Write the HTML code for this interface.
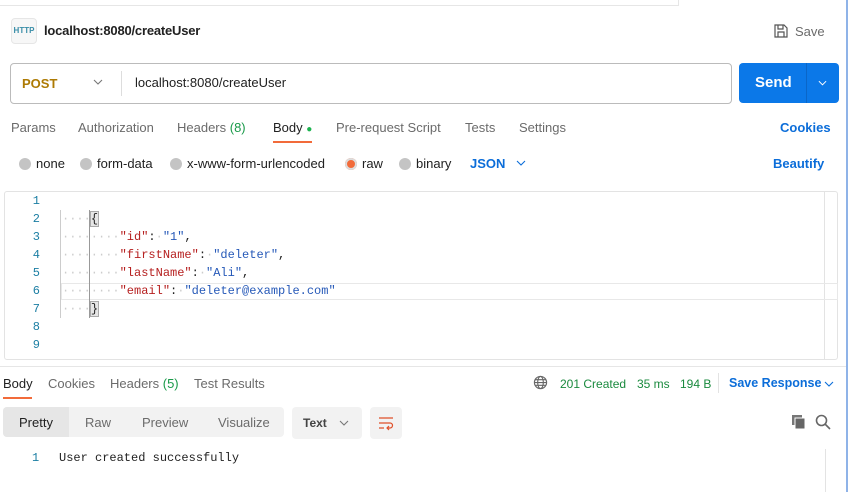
<!DOCTYPE html>
<html><head><style>
*{box-sizing:border-box;margin:0;padding:0}
body{width:850px;height:492px;overflow:hidden;background:#fff;font-family:"Liberation Sans",sans-serif;font-size:13px;color:#212121;position:relative}
.a{position:absolute;white-space:nowrap}
.mono{font-family:"Liberation Mono",monospace;font-size:12px}
.g{color:#6b6b6b}
.blue{color:#0b6dd9;font-weight:bold}
.rad{display:inline-block;width:12px;height:12px;border-radius:50%;background:#c4c4c4;vertical-align:-2px;margin-right:5px}
.ln{position:absolute;left:20px;width:20px;text-align:right;color:#1b7ea3}
.k{color:#b62020}.s{color:#2659b8}.d{color:#ccc}
.chev{position:absolute}
</style></head><body>
<div class="a" style="left:0;top:5px;width:678px;border-top:1px solid #e6e6e6"></div>
<div class="a" style="left:678px;top:0;height:6px;border-left:1px solid #e6e6e6"></div>
<div class="a" style="left:846px;top:0;width:2px;height:492px;background:#8fb3e8"></div>
<div class="a" style="left:11px;top:18px;width:26px;height:26px;border:1px solid #e6e6e6;border-radius:4px;background:#f7f7f7;font-size:8px;color:#3a8ea8;text-align:center;line-height:24px;font-weight:bold">HTTP</div>
<div class="a" style="left:44px;top:23px;font-weight:bold;font-size:13px;letter-spacing:-0.2px">localhost:8080/createUser</div>
<svg class="a" style="left:773px;top:23px" width="16" height="16" viewBox="0 0 16 16" fill="none" stroke="#555" stroke-width="1.2"><path d="M2 2h9l3 3v9H2z M5 2v4h5V2 M5 14V9h6v5"/></svg>
<div class="a g" style="left:795px;top:24px">Save</div>
<div class="a" style="left:10px;top:63px;width:722px;height:41px;border:1px solid #bbb;border-radius:4px"></div>
<div class="a" style="left:22px;top:76px;color:#ad7a03;font-weight:bold">POST</div>
<svg class="chev" style="left:93px;top:79px" width="10" height="6" viewBox="0 0 10 6" fill="none" stroke="#777" stroke-width="1.1"><path d="M1 1l4 4 4-4"/></svg>
<div class="a" style="left:121px;top:71px;height:25px;border-left:1px solid #ddd"></div>
<div class="a" style="left:135px;top:75px">localhost:8080/createUser</div>
<div class="a" style="left:739px;top:63px;width:100px;height:40px;background:#0b78e8;border-radius:4px"></div>
<div class="a" style="left:806px;top:63px;height:40px;border-left:1px solid #0a66c8"></div>
<div class="a" style="left:755px;top:74px;color:#fff;font-weight:bold;font-size:15px">Send</div>
<svg class="chev" style="left:818px;top:80px" width="9" height="6" viewBox="0 0 10 6" fill="none" stroke="#fff" stroke-width="1.1"><path d="M1 1l4 4 4-4"/></svg>
<div class="a g" style="left:11px;top:120px">Params</div>
<div class="a g" style="left:78px;top:120px">Authorization</div>
<div class="a g" style="left:177px;top:120px">Headers <span style="color:#1a9a4a">(8)</span></div>
<div class="a" style="left:273px;top:120px">Body <span style="color:#1cb34f;font-size:10px">●</span></div>
<div class="a" style="left:273px;top:141px;width:39px;height:2px;background:#f26b3a"></div>
<div class="a g" style="left:336px;top:120px">Pre-request Script</div>
<div class="a g" style="left:465px;top:120px">Tests</div>
<div class="a g" style="left:519px;top:120px">Settings</div>
<div class="a blue" style="left:780px;top:120px">Cookies</div>
<div class="a" style="left:19px;top:156px"><span class="rad"></span>none</div>
<div class="a" style="left:80px;top:156px"><span class="rad"></span>form-data</div>
<div class="a" style="left:170px;top:156px"><span class="rad"></span>x-www-form-urlencoded</div>
<div class="a" style="left:345px;top:156px"><span class="rad" style="background:#f26b3a;box-shadow:0 0 0 2px #ddd inset"></span>raw</div>
<div class="a" style="left:399px;top:156px"><span class="rad"></span>binary</div>
<div class="a blue" style="left:470px;top:156px">JSON</div>
<svg class="chev" style="left:516px;top:160px" width="10" height="6" viewBox="0 0 10 6" fill="none" stroke="#0b6dd9" stroke-width="1.1"><path d="M1 1l4 4 4-4"/></svg>
<div class="a blue" style="left:773px;top:156px">Beautify</div>
<div class="a" style="left:4px;top:191px;width:834px;height:169px;border:1px solid #e3e3e3;border-radius:3px"></div>
<div class="a" style="left:824px;top:191px;width:14px;height:169px;border-left:1px solid #e3e3e3"></div>
<div class="a" style="left:61px;top:283px;width:777px;height:17px;border:1px solid #e8e8e8"></div>
<div class="a" style="left:60px;top:210px;height:108px;border-left:1px solid #ccc"></div>
<div class="a" style="left:89px;top:210px;height:108px;border-left:1px solid #999"></div>
<div class="mono">
<div class="ln" style="top:194px">1</div><div class="ln" style="top:212px">2</div><div class="ln" style="top:230px">3</div><div class="ln" style="top:248px">4</div><div class="ln" style="top:266px">5</div><div class="ln" style="top:284px">6</div><div class="ln" style="top:302px">7</div><div class="ln" style="top:320px">8</div><div class="ln" style="top:338px">9</div>
<div class="a" style="left:62px;top:212px"><span class="d">····</span><span style="background:#e6e6e6;outline:1px solid #aaa">{</span></div>
<div class="a" style="left:62px;top:230px"><span class="d">········</span><span class="k">"id"</span>:<span class="d">·</span><span class="s">"1"</span>,</div>
<div class="a" style="left:62px;top:248px"><span class="d">········</span><span class="k">"firstName"</span>:<span class="d">·</span><span class="s">"deleter"</span>,</div>
<div class="a" style="left:62px;top:266px"><span class="d">········</span><span class="k">"lastName"</span>:<span class="d">·</span><span class="s">"Ali"</span>,</div>
<div class="a" style="left:62px;top:284px"><span class="d">········</span><span class="k">"email"</span>:<span class="d">·</span><span class="s">"deleter@example.com"</span></div>
<div class="a" style="left:62px;top:302px"><span class="d">····</span><span style="background:#e6e6e6;outline:1px solid #aaa">}</span></div>
</div>
<div class="a" style="left:0;top:366px;width:846px;border-top:1px solid #e6e6e6"></div>
<div class="a" style="left:3px;top:376px">Body</div>
<div class="a" style="left:3px;top:397px;width:29px;height:2px;background:#f26b3a"></div>
<div class="a g" style="left:48px;top:376px">Cookies</div>
<div class="a g" style="left:110px;top:376px">Headers <span style="color:#1a9a4a">(5)</span></div>
<div class="a g" style="left:194px;top:376px">Test Results</div>
<svg class="a" style="left:533px;top:375px" width="15" height="15" viewBox="0 0 16 16" fill="none" stroke="#666" stroke-width="1.2"><circle cx="8" cy="8" r="6.5"/><ellipse cx="8" cy="8" rx="3" ry="6.5"/><path d="M1.5 8h13M2.5 5h11M2.5 11h11"/></svg>
<div class="a" style="left:560px;top:377px;font-size:12px;color:#1a8a3e">201 Created</div>
<div class="a" style="left:637px;top:377px;font-size:12px;color:#1a8a3e">35 ms</div>
<div class="a" style="left:680px;top:377px;font-size:12px;color:#1a8a3e">194 B</div>
<div class="a" style="left:718px;top:373px;height:20px;border-left:1px solid #e3e3e3"></div>
<div class="a blue" style="left:729px;top:376px;font-size:12.5px">Save Response</div>
<svg class="chev" style="left:824px;top:381px" width="10" height="6" viewBox="0 0 10 6" fill="none" stroke="#0b6dd9" stroke-width="1.1"><path d="M1 1l4 4 4-4"/></svg>
<div class="a" style="left:3px;top:407px;width:281px;height:30px;background:#f2f2f2;border-radius:4px"></div>
<div class="a" style="left:3px;top:407px;width:66px;height:30px;background:#e6e6e6;border-radius:4px 0 0 4px"></div>
<div class="a" style="left:19px;top:415px">Pretty</div>
<div class="a g" style="left:85px;top:415px">Raw</div>
<div class="a g" style="left:142px;top:415px">Preview</div>
<div class="a g" style="left:218px;top:415px">Visualize</div>
<div class="a" style="left:292px;top:407px;width:70px;height:32px;background:#f2f2f2;border-radius:4px"></div>
<div class="a" style="left:303px;top:416px;font-weight:bold;color:#444;font-size:12px">Text</div>
<svg class="chev" style="left:339px;top:420px" width="10" height="6" viewBox="0 0 10 6" fill="none" stroke="#777" stroke-width="1.1"><path d="M1 1l4 4 4-4"/></svg>
<div class="a" style="left:370px;top:407px;width:32px;height:32px;background:#f2f2f2;border-radius:4px"></div>
<svg class="a" style="left:378px;top:415px" width="16" height="16" viewBox="0 0 16 16" fill="none" stroke="#e0502a" stroke-width="1.2"><path d="M1 3h14M1 8h11a2.5 2.5 0 010 5H9M11 11l-2 2 2 2M1 13h5"/></svg>
<svg class="a" style="left:791px;top:414px" width="16" height="16" viewBox="0 0 16 16"><rect x="1" y="1" width="10" height="10" fill="#777"/><rect x="4" y="4" width="10" height="11" fill="#666" stroke="#fff"/></svg>
<svg class="a" style="left:815px;top:414px" width="16" height="16" viewBox="0 0 16 16" fill="none" stroke="#666" stroke-width="1.6"><circle cx="6.5" cy="6.5" r="5"/><path d="M10 10l5 5"/></svg>
<div class="a mono" style="left:32px;top:451px;color:#1b7ea3">1</div>
<div class="a mono" style="left:59px;top:451px;color:#222">User created successfully</div>
<div class="a" style="left:825px;top:449px;height:43px;border-left:1px solid #e3e3e3"></div>
</body></html>
